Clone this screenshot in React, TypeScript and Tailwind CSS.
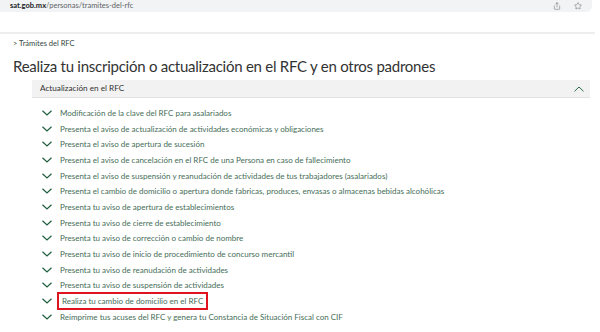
import { Share, Star } from "lucide-react";

const items = [
  "Modificación de la clave del RFC para asalariados",
  "Presenta el aviso de actualización de actividades económicas y obligaciones",
  "Presenta el aviso de apertura de sucesión",
  "Presenta el aviso de cancelación en el RFC de una Persona en caso de fallecimiento",
  "Presenta el aviso de suspensión y reanudación de actividades de tus trabajadores (asalariados)",
  "Presenta el cambio de domicilio o apertura donde fabricas, produces, envasas o almacenas bebidas alcohólicas",
  "Presenta tu aviso de apertura de establecimientos",
  "Presenta tu aviso de cierre de establecimiento",
  "Presenta tu aviso de corrección o cambio de nombre",
  "Presenta tu aviso de inicio de procedimiento de concurso mercantil",
  "Presenta tu aviso de reanudación de actividades",
  "Presenta tu aviso de suspensión de actividades",
  "Realiza tu cambio de domicilio en el RFC",
  "Reimprime tus acuses del RFC y genera tu Constancia de Situación Fiscal con CIF",
];

const ChevronDown = () => (
  <svg width="10" height="6" viewBox="0 0 10 6" className="shrink-0">
    <path d="M0.5 0.7 L5 5 L9.5 0.7" fill="none" stroke="#1f5f3f" strokeWidth="1.2" />
  </svg>
);

export default function App() {
  return (
    <div className="w-[600px] h-[332px] bg-white overflow-hidden font-['Lato',sans-serif]">
      {/* barra de direcciones */}
      <div className="h-[12px] mr-[8px] bg-[#f1f3f4] rounded-br-[6px] flex items-center justify-between pl-[10px] pr-[10px]">
        <div className="text-[7.5px] leading-none">
          <span className="text-[#202124] font-bold">sat.gob.mx</span>
          <span className="text-[#5f6368]">/personas/tramites-del-rfc</span>
        </div>
        <div className="flex items-center gap-[13px] text-[#5f6368]">
          <Share size={8} strokeWidth={1.5} />
          <Star size={8} strokeWidth={1.5} />
        </div>
      </div>

      <div className="mt-[20px] mr-[5px] h-[2px] bg-[#eeeeee]" />

      <div className="pl-[13px] pt-[4px] text-[7.5px] leading-[12px] text-[#35483e]">
        &gt; Trámites del RFC
      </div>

      <h1 className="pl-[13px] pt-[6px] text-[15px] leading-[20px] text-[#333333] tracking-[-0.25px]">
        Realiza tu inscripción o actualización en el RFC y en otros padrones
      </h1>

      <div className="ml-[32px] mr-[10px] mt-[4px]">
        <div className="h-[18px] bg-[#f2f2f2] border-b border-[#e2e2e2] flex items-center justify-between pl-[8px] pr-[6px]">
          <span className="text-[8.2px] text-[#333333]">Actualización en el RFC</span>
          <svg width="10" height="6" viewBox="0 0 10 6">
            <path d="M0.5 5.3 L5 1 L9.5 5.3" fill="none" stroke="#2f6b4c" strokeWidth="1" />
          </svg>
        </div>

        <ul className="pt-[7px] pl-[10px] flex flex-col">
          {items.map((t, i) => (
            <li key={i} className="h-[15.7px] flex items-center gap-[8px]">
              <ChevronDown />
              <span
                className={`text-[8px] leading-[12px] text-[#456e57] ${
                  i === 12 ? "outline-2 outline-[#e0141e] outline-offset-[1px] px-[2px]" : ""
                }`}
              >
                {t}
              </span>
            </li>
          ))}
        </ul>
      </div>
    </div>
  );
}
